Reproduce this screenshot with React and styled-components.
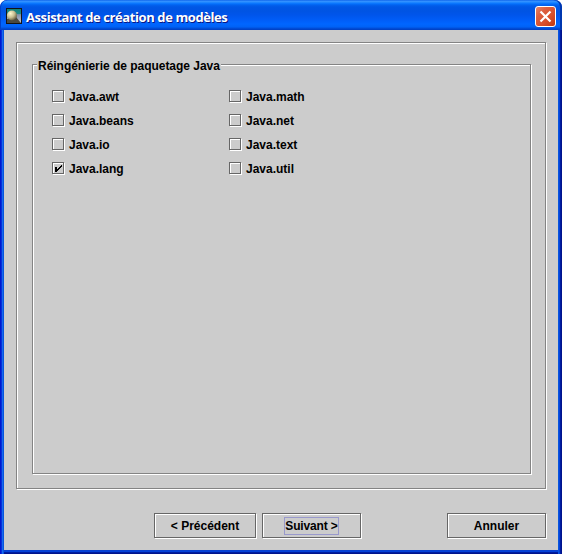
import React from "react";
import styled, { createGlobalStyle } from "styled-components";

const Global = createGlobalStyle`
  * { box-sizing: border-box; }
  body { margin: 0; background: #fff; overflow: hidden; }
`;

const Window = styled.div`
  width: 562px;
  height: 554px;
  display: flex;
  flex-direction: column;
  overflow: hidden;
  border-radius: 7px 7px 0 0;
  background: linear-gradient(90deg, #0019cf 0 1px, #0831d9 1px 2px, #166aee 2px 3px, #0855dd 3px 4px, transparent 4px 558px, #0855dd 558px 559px, #0441d8 559px 560px, #001da0 560px 561px, #00138c 561px),
    linear-gradient(#0831d9 550px, #0841d0 550px 551px, #0441d8 551px 552px, #001da0 552px 553px, #00138c 553px);
  font: bold 12px/14px "Liberation Sans", Arial, sans-serif;
  color: #000;
`;

const TitleBar = styled.header`
  flex: 0 0 30px;
  display: flex;
  align-items: center;
  padding: 2px 6px 0 6px;
  border-radius: 7px 7px 0 0;
  background: linear-gradient(#0058e6 0, #3a93ff 1px, #288eff 2px, #127dff 3px, #036ffc 4px, #0262ee 5px, #0057e5 7px, #0054e3 11px, #0055eb 15px, #005bf5 19px, #0066ff 24px, #0062f5 27px, #0050dd 28px, #003dbf 30px);
  box-shadow: inset 1px 0 #0040c8, inset -2px 0 #0038b0;
`;

const AppIcon = styled.svg`
  flex: none;
  width: 16px;
  height: 16px;
`;

const Title = styled.h1`
  margin: 0 auto 0 4px;
  padding-top: 1px;
  font: bold 13px/18px "Open Sans", "Noto Sans", sans-serif;
  letter-spacing: -0.41px;
  color: #fff;
  text-shadow: 1px 1px 0 #0a1883;
  white-space: nowrap;
`;

const CloseButton = styled.button`
  width: 21px;
  height: 21px;
  padding: 0;
  border: 1px solid #fff;
  border-radius: 3px;
  background: linear-gradient(135deg, #e58468 0, #dc5f40 30%, #d84e2a 65%, #bd3810 100%);
  svg { display: block; }
`;

const Body = styled.main`
  flex: 0 0 520px;
  margin: 0 4px;
  padding: 12px;
  background: #ccc;
  display: flex;
  flex-direction: column;
  justify-content: space-between;
`;

const EtchedPanel = styled.section`
  height: 447px;
  padding: 21px 14px 15px 15px;
  border: 1px solid #848484;
  box-shadow: 1px 1px 0 #fff, inset 1px 1px 0 #fff;
`;

const Group = styled.fieldset`
  height: 410px;
  min-width: 0;
  margin: 0;
  padding: 0;
  border: 1px solid #848484;
  box-shadow: 1px 1px 0 #fff, inset 1px 1px 0 #fff;
`;

const GroupTitle = styled.div`
  width: max-content;
  height: 14px;
  margin: -6px 0 0 4px;
  padding: 0 1px;
  background: #ccc;
  letter-spacing: -0.03px;
  white-space: nowrap;
`;

const Options = styled.div`
  display: grid;
  grid-template-columns: 177px 177px;
  grid-auto-rows: 24px;
  padding: 12px 0 0 19px;
`;

const Option = styled.label`
  display: flex;
  align-items: center;
  gap: 5px;
`;

const Box = styled.span`
  width: 12px;
  height: 12px;
  margin-bottom: 2px;
  border: 1px solid #666;
  box-shadow: 1px 1px 0 #fff, inset 1px 1px 0 #fff;
  svg { display: block; }
`;

const Actions = styled.footer`
  display: flex;
  height: 25px;
  padding-left: 138px;
  gap: 6px;
`;

const Button = styled.button`
  width: ${(p) => p.$width}px;
  height: 25px;
  margin: 0;
  margin-left: ${(p) => (p.$end ? "auto" : 0)};
  padding: 1px 0 0;
  display: flex;
  align-items: center;
  justify-content: center;
  border: 1px solid #666;
  box-shadow: 1px 1px 0 #fff, inset 1px 1px 0 #fff;
  background: #ccc;
  font: inherit;
  color: inherit;
`;

const ButtonLabel = styled.span`
  height: 18px;
  line-height: 18px;
  white-space: nowrap;
  letter-spacing: ${(p) => (p.$focused ? "-0.15px" : "0")};
  padding: ${(p) => (p.$focused ? "0 1px" : "0")};
  box-shadow: ${(p) => (p.$focused ? "inset 0 0 0 1px #9999cc" : "none")};
`;

const options = [
  ["Java.awt", false], ["Java.math", false],
  ["Java.beans", false], ["Java.net", false],
  ["Java.io", false], ["Java.text", false],
  ["Java.lang", true], ["Java.util", false],
];

const CheckMark = () => (
  <svg width="10" height="10" viewBox="0 0 10 10" shapeRendering="crispEdges">
    <path d="M2 4h2v2h1v-1h1v-1h1v-1h1v-1h1v2h-1v1h-1v1h-1v1h-1v1h-1v1h-2z" fill="#000" />
  </svg>
);

export default function App() {
  return (
    <Window>
      <Global />
      <TitleBar>
        <AppIcon viewBox="0 0 16 16">
          <defs>
            <linearGradient id="sky" x1="0" y1="0" x2="0" y2="1">
              <stop offset="0" stopColor="#138078" />
              <stop offset=".35" stopColor="#208b86" />
              <stop offset=".4" stopColor="#8190a8" />
              <stop offset="1" stopColor="#c5c7d0" />
            </linearGradient>
            <radialGradient id="ball" cx=".35" cy=".3" r=".8">
              <stop offset="0" stopColor="#fff8cf" />
              <stop offset=".5" stopColor="#c6bd90" />
              <stop offset="1" stopColor="#4d4630" />
            </radialGradient>
          </defs>
          <rect width="16" height="16" fill="#141414" />
          <rect x="1" y="1" width="14" height="14" fill="url(#sky)" />
          <path d="M1 11L10 9L15 15H1z" fill="#4a4940" />
          <circle cx="6" cy="7.5" r="5" fill="url(#ball)" />
        </AppIcon>
        <Title>Assistant de création de modèles</Title>
        <CloseButton aria-label="Fermer">
          <svg width="19" height="19" viewBox="0 0 19 19">
            <path d="M4.5 4.5L14.5 14.5M14.5 4.5L4.5 14.5" stroke="#fff" strokeWidth="2.2" />
          </svg>
        </CloseButton>
      </TitleBar>
      <Body>
        <EtchedPanel>
          <Group>
            <GroupTitle>Réingénierie de paquetage Java</GroupTitle>
            <Options>
              {options.map(([name, checked]) => (
                <Option key={name}>
                  <Box>{checked && <CheckMark />}</Box>
                  {name}
                </Option>
              ))}
            </Options>
          </Group>
        </EtchedPanel>
        <Actions>
          <Button $width={102}><ButtonLabel>&lt; Précédent</ButtonLabel></Button>
          <Button $width={99}><ButtonLabel $focused>Suivant &gt;</ButtonLabel></Button>
          <Button $width={99} $end><ButtonLabel>Annuler</ButtonLabel></Button>
        </Actions>
      </Body>
    </Window>
  );
}
